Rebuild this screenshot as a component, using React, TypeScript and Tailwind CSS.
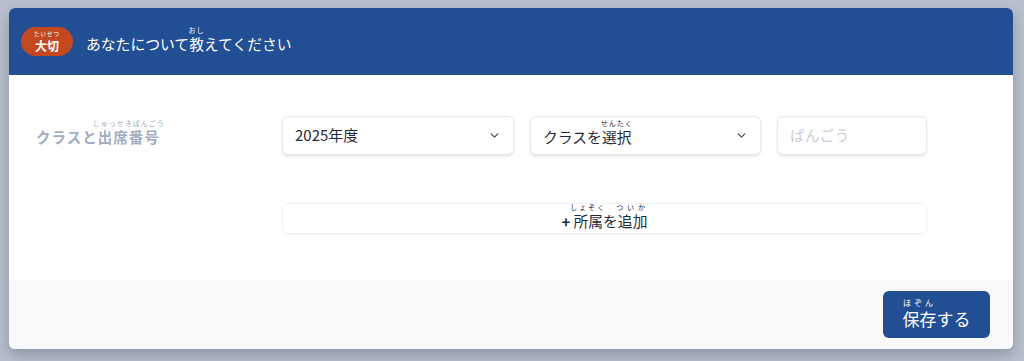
import React from "react";
import { ChevronDown } from "lucide-react";

const font = { fontFamily: '"Noto Sans CJK JP", "Noto Sans", sans-serif' };

function R({ b, t, rtClass = "text-[7px]", gap = "mb-[1px]" }: { b: string; t: string; rtClass?: string; gap?: string }) {
  return (
    <span className="relative inline-block">
      {b}
      <span
        className={`pointer-events-none absolute bottom-full left-1/2 -translate-x-1/2 whitespace-nowrap leading-none tracking-[1px] ${gap} ${rtClass}`}
      >
        {t}
      </span>
    </span>
  );
}

export default function App() {
  return (
    <div className="min-h-[361px] w-full bg-[#b9bfcc] pl-[9px] pr-[11px] pt-[8px] pb-[12px]" style={font}>
      <div className="overflow-hidden rounded-md bg-white shadow-[0_6px_14px_rgba(60,70,95,0.35)]">
        {/* header */}
        <div className="flex h-[67px] items-center gap-[13px] bg-[#224e94] px-[12px]">
          <span className="flex h-[29px] w-[52px] items-center justify-center rounded-full bg-[#c4481f] pt-[8px] text-[12px] font-bold leading-none text-white">
            <R b="大切" t="たいせつ" rtClass="text-[5.5px] font-normal tracking-[0px]" gap="mb-[2px]" />
          </span>
          <h1 className="pt-[6px] text-[14.8px] leading-none text-white">
            あなたについて
            <R b="教" t="おし" rtClass="text-[7px]" gap="mb-[3px]" />
            えてください
          </h1>
        </div>

        {/* body */}
        <div className="flex flex-col gap-[48px] px-[27px] pt-[41px] pb-[46px]">
          <div className="flex items-center">
            <div className="w-[246px] pt-[4px] text-[14.5px] font-bold leading-none tracking-[1px] text-[#a3adbf]">
              クラスと
              <R b="出席番号" t="しゅっせきばんごう" rtClass="text-[7px] font-normal tracking-[0.5px]" gap="mb-[3px]" />
            </div>
            <div className="flex gap-[16px]">
              <div className="flex h-[39px] w-[232px] items-center justify-between rounded-md border border-[#e8eaee] bg-white pl-[12px] pr-[12px] shadow-sm">
                <span className="text-[15px] text-[#1f2937]">2025年度</span>
                <ChevronDown size={13} strokeWidth={2.6} className="text-[#4b5563]" />
              </div>
              <div className="flex h-[39px] w-[231px] items-center justify-between rounded-md border border-[#e8eaee] bg-white pl-[12px] pr-[12px] shadow-sm">
                <span className="pt-[4px] text-[14.8px] leading-none text-[#1f2937]">
                  クラスを
                  <R b="選択" t="せんたく" rtClass="text-[7px]" gap="mb-[3px]" />
                </span>
                <ChevronDown size={13} strokeWidth={2.6} className="text-[#4b5563]" />
              </div>
              <div className="flex h-[39px] w-[150px] items-center rounded-md border border-[#e8eaee] bg-white pl-[12px] shadow-sm">
                <span className="text-[14.8px] text-[#c9cdd5]">ばんごう</span>
              </div>
            </div>
          </div>
          <div className="flex">
            <div className="w-[246px]" />
            <button className="flex h-[31px] w-[645px] items-center justify-center rounded-md border border-[#f0f1f4] bg-white pt-[5px] text-[14.8px] leading-none text-[#1f2937] shadow-[0_1px_2px_rgba(0,0,0,0.04)]">
              <span className="mr-[3px] text-[15px] font-bold">+</span>
              <R b="所属" t="しょぞく" rtClass="text-[7px] tracking-[2px]" gap="mb-[3px]" />
              を
              <R b="追加" t="ついか" rtClass="text-[7px] tracking-[4px]" gap="mb-[3px]" />
            </button>
          </div>
        </div>

        {/* footer */}
        <div className="flex h-[69px] items-center justify-end bg-[#f8f9fb] pr-[23px]">
          <button className="flex h-[47px] w-[107px] items-center justify-center rounded-md bg-[#224e94] pt-[7px] text-[17px] leading-none text-white">
            <R b="保存" t="ほぞん" rtClass="text-[8px] tracking-[3px]" gap="mb-[3px]" />
            する
          </button>
        </div>
      </div>
    </div>
  );
}
